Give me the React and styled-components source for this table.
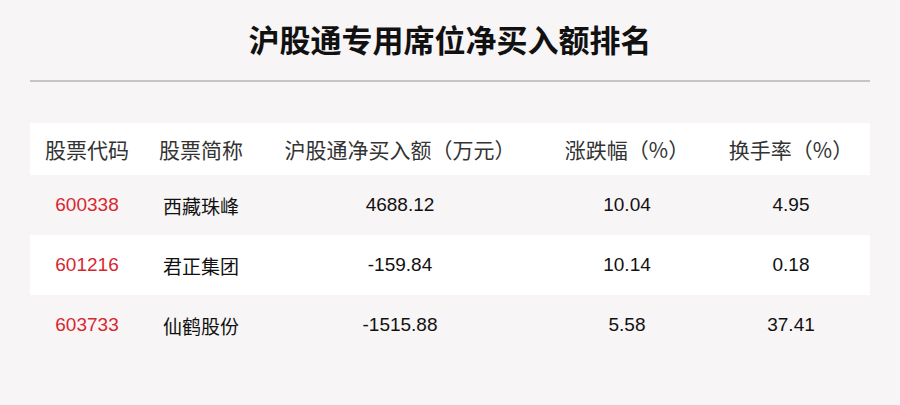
import React from 'react';
import styled, { createGlobalStyle } from 'styled-components';

const GlobalStyle = createGlobalStyle`
  html, body {
    margin: 0;
    padding: 0;
    background: #f8f5f6;
  }
  body {
    font-family: "Liberation Sans", "Noto Sans CJK SC", sans-serif;
  }
`;

const headers = ['股票代码', '股票简称', '沪股通净买入额（万元）', '涨跌幅（%）', '换手率（%）'];

const rows = [
  { code: '600338', name: '西藏珠峰', amount: '4688.12', change: '10.04', turnover: '4.95' },
  { code: '601216', name: '君正集团', amount: '-159.84', change: '10.14', turnover: '0.18' },
  { code: '603733', name: '仙鹤股份', amount: '-1515.88', change: '5.58', turnover: '37.41' },
];

const Page = styled.div`
  width: 900px;
  height: 405px;
  background: #f8f5f6;
  padding: 0 30px;
  box-sizing: border-box;
  overflow: hidden;
`;

const Title = styled.h1`
  margin: 0;
  height: 80px;
  display: flex;
  align-items: center;
  justify-content: center;
  padding-bottom: 4px;
  box-sizing: border-box;
  font-family: "Noto Sans CJK SC", sans-serif;
  font-weight: 700;
  font-size: 31px;
  color: #111;
`;

const Divider = styled.hr`
  margin: 0 0 41px;
  border: 0;
  height: 2px;
  background: #c6c4c5;
`;

const Table = styled.div`
  display: flex;
  flex-direction: column;
`;

const Row = styled.div`
  display: grid;
  grid-template-columns: 114px 114px 284px 170px 158px;
  height: ${({ $head }) => ($head ? '52px' : '60px')};
  background: ${({ $white }) => ($white ? '#ffffff' : 'transparent')};
`;

const HeadCell = styled.div`
  display: flex;
  align-items: center;
  justify-content: center;
  font-family: "Noto Sans CJK SC", sans-serif;
  font-size: 21px;
  color: #333;
  white-space: nowrap;
`;

const Cell = styled.div`
  display: flex;
  align-items: center;
  justify-content: center;
  font-family: ${({ $cjk }) =>
    $cjk ? '"Noto Sans CJK SC", sans-serif' : '"Liberation Sans", "Noto Sans CJK SC", sans-serif'};
  font-size: 19px;
  color: ${({ $red }) => ($red ? '#d8272f' : '#111')};
  white-space: nowrap;
`;

const App = () => (
  <>
    <GlobalStyle />
    <Page>
      <Title>沪股通专用席位净买入额排名</Title>
      <Divider />
      <Table>
        <Row $head $white>
          {headers.map((h) => (
            <HeadCell key={h}>{h}</HeadCell>
          ))}
        </Row>
        {rows.map((r, i) => (
          <Row key={r.code} $white={i % 2 === 1}>
            <Cell $red>{r.code}</Cell>
            <Cell $cjk>{r.name}</Cell>
            <Cell>{r.amount}</Cell>
            <Cell>{r.change}</Cell>
            <Cell>{r.turnover}</Cell>
          </Row>
        ))}
      </Table>
    </Page>
  </>
);

export default App;
